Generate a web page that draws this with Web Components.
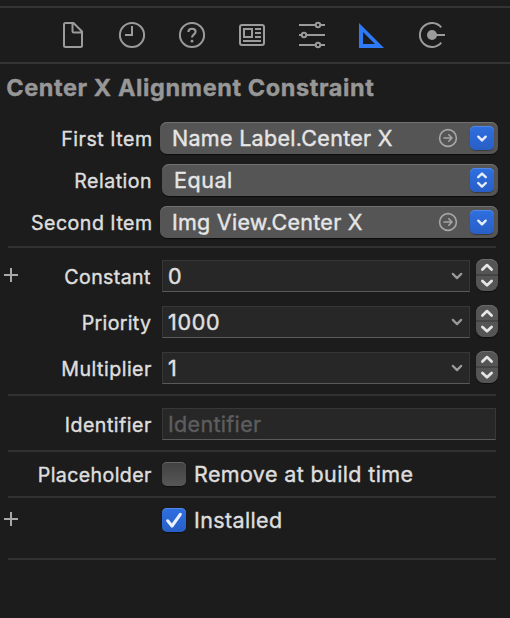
<!DOCTYPE html>
<html lang="en">
<head>
<meta charset="utf-8">
<title>Size Inspector</title>
<style>
html,body{margin:0;background:#1c1c1c;color:#dedede;font-family:Inter,"Liberation Sans",sans-serif;overflow:hidden}
</style>
</head>
<body>
<constraint-inspector></constraint-inspector>
<script>
function define(name, css, html, after) {
  const t = document.createElement('template');
  t.innerHTML = '<style>' + css + '</style>' + html;
  customElements.define(name, class extends HTMLElement {
    constructor() { super(); this.attachShadow({mode: 'open'}).append(t.content.cloneNode(true)); }
    connectedCallback() { if (after) after(this, this.shadowRoot); }
  });
}

/* Text tracked to an exact ink width given by its "w" attribute. */
const ctx = document.createElement('canvas').getContext('2d');
define('tracked-text', ':host{display:block;flex:none;white-space:pre;line-height:28px;height:28px;-webkit-text-stroke:.4px currentColor}span{display:block}', '<span><slot></slot></span>', (el, root) => {
  const w = +el.getAttribute('w'), s = el.textContent, cs = getComputedStyle(el);
  ctx.font = cs.fontWeight + ' ' + cs.fontSize + ' ' + cs.fontFamily;
  const m = ctx.measureText(s), ink = m.actualBoundingBoxRight + m.actualBoundingBoxLeft;
  const span = root.querySelector('span');
  el.style.width = w + 'px';
  span.style.marginLeft = m.actualBoundingBoxLeft + 'px';
  if (s.length > 1) span.style.letterSpacing = (w - ink) / (s.length - 1) + 'px';
});

define('inspector-tabs', `
:host{display:block;height:54px;margin-top:6px;border-top:2px solid #343434;border-bottom:2px solid #343434}
svg{display:block;width:510px;height:54px;fill:none;stroke:#9b9b9b;stroke-width:2}`, `
<svg viewBox="0 8 510 54">
<path d="M65.5 23H73.5L82 31.5V45.5Q82 47 80.5 47H65.5Q64 47 64 45.5V24.5Q64 23 65.5 23ZM72.5 23V31Q72.5 32.5 74 32.5H82"/>
<circle cx="132" cy="35" r="12.1"/><path d="M125 35H132V26"/>
<circle cx="192" cy="35" r="12.1"/>
<path d="M188.4 32C188.5 29.8 189.9 28.8 192 28.8C194.1 28.8 195.6 30 195.6 31.8C195.6 34.4 192 34.4 192 37.6" stroke-width="2.1"/><circle cx="192" cy="41.2" r="1.4" fill="#9b9b9b" stroke="none"/>
<rect x="240" y="25" width="24" height="20" rx="2"/><rect x="244" y="29" width="8" height="8"/><path d="M255 29H261M255 33H261M255 37H261M243 41H261"/>
<path d="M299 25H315.5M320.5 25H325M299 35H301.5M306.5 35H325M299 45H315.5M320.5 45H325"/><circle cx="318" cy="25" r="2.2"/><circle cx="304" cy="35" r="2.2"/><circle cx="318" cy="45" r="2.2"/>
<path d="M359 23L384 48H359ZM363 32V44H375Z" fill="#2e7af6" fill-rule="evenodd" stroke="none"/>
<path d="M441.2 27.4A12 12 0 1 0 441.2 42.6"/><circle cx="432" cy="35" r="5" fill="#9b9b9b" stroke="none"/><path d="M432 35H445"/>
</svg>`);

define('panel-title', ':host{display:flex;height:30px;padding:10px 0 0 7.2px;font-size:23.5px;font-weight:700;color:#979797}', '<slot></slot>');
define('panel-rule', ':host{display:block;height:2px;margin:0 14px 0 8px;background:#313131}', '');

define('form-row', `
:host{display:grid;grid-template-columns:22px 129px 1fr;height:32px;align-items:center}
.add{width:14px;height:14px;margin-left:4px;margin-top:-2px;background:linear-gradient(#a9a9a9,#a9a9a9) 6px 0/2px 14px no-repeat,linear-gradient(#a9a9a9,#a9a9a9) 0 6px/14px 2px no-repeat;visibility:hidden}
:host([add]) .add{visibility:visible}
.label{display:flex;justify-content:flex-end;font-size:19.6px;padding-top:1px}
.body{display:flex;align-items:center;padding-left:11px}
:host([wide]) .body{padding-left:9px}`, '<div class="add"></div><div class="label"><slot name="label"></slot></div><div class="body"><slot></slot></div>');

define('pop-button', `
:host{display:flex;box-sizing:border-box;flex:1;height:32px;margin-right:12px;padding:0 4px 0 13px;align-items:center;border-radius:7px;background:#555;box-shadow:inset 0 1px #717171,0 1px 1px #0009;font-size:21.5px;color:#e6e6e6}
.sp{flex:1}.go{margin-right:12px;display:none}:host([link]) .go{display:block}
.btn{width:24px;height:24px;border-radius:5px;background:linear-gradient(#2f6fe0,#285fc6);box-shadow:inset 0 1px #5188e8,0 1px 1px #0005}
svg{display:block;fill:none;stroke-linecap:round;stroke-linejoin:round}
.two{display:none}:host(:not([link])) .two{display:block}:host(:not([link])) .one{display:none}`, `
<slot></slot><div class="sp"></div>
<svg class="go" width="20" height="20" stroke="#a6a6a6" stroke-width="1.6"><circle cx="10" cy="10" r="8.4"/><path d="M6 10H14M10.8 6.8L14 10L10.8 13.2"/></svg>
<div class="btn"><svg width="24" height="24" stroke="#e6edfb" stroke-width="2.4"><path class="one" d="M8.3 10.7L12 14.4L15.7 10.7"/><path class="two" d="M8.2 9.2L12 5.6L15.8 9.2M8.2 15L12 18.6L15.8 15"/></svg></div>`);

define('value-field', `
:host{display:flex;box-sizing:border-box;height:32px;width:308px;padding:0 6px;align-items:center;justify-content:space-between;background:#272727;border:1px solid #373737;border-bottom-color:#5a5a5a;font-size:21.5px;color:#e0e0e0}
:host([plain]){width:334px;color:#5d5d5d}:host([plain]) svg{display:none}`, `
<slot></slot><svg width="12" height="8" fill="none" stroke="#999" stroke-width="2.2" stroke-linecap="round" stroke-linejoin="round"><path d="M1.8 1.9L6 6.1L10.2 1.9"/></svg>`);

define('step-control', `
:host{display:block;width:22px;height:32px;margin:-2px 0 0 6px;border-radius:8px;background:linear-gradient(#555 15px,#444 15px,#444 17px,#555 17px);box-shadow:inset 0 1px #6b6b6b,0 1px 1px #0008}
svg{display:block;fill:none;stroke:#e6e6e6;stroke-width:2.7;stroke-linecap:round;stroke-linejoin:round}`, `
<svg width="22" height="32"><path d="M6.4 10.5L11 6.1L15.6 10.5M6.4 21.9L11 26.3L15.6 21.9"/></svg>`);

define('check-box', `
:host{display:flex;align-items:center;font-size:21.5px;color:#dedede}
.box{width:24px;height:24px;margin-right:9px;border-radius:5px;background:linear-gradient(#414141,#575757);box-shadow:inset 0 1px #666,0 1px 1px #0006}
svg{display:none}:host([checked]) .box{background:linear-gradient(#2f6fe0,#285fc6);box-shadow:inset 0 1px #5188e8,0 1px 1px #0006}:host([checked]) svg{display:block}`, `
<div class="box"><svg width="24" height="24" fill="none" stroke="#e9f0fc" stroke-width="3.1" stroke-linecap="round" stroke-linejoin="round"><path d="M5.7 12.8L10 18L18.3 6.3"/></svg></div><slot></slot>`);

define('constraint-inspector', `
:host{display:flow-root;box-sizing:border-box;width:510px;height:618px;background:#1c1c1c}
.g{display:grid}.items{gap:10px;padding:18px 0 8px}.numbers{gap:14px;padding:12px 0 10px}.ident{padding:12px 0 10px}.ph{padding:6px 0}.inst{padding:6px 0 22px}`, `
<inspector-tabs></inspector-tabs>
<panel-title><tracked-text w="367">Center X Alignment Constraint</tracked-text></panel-title>
<div class="g items">
<form-row wide><tracked-text slot="label" w="88.8">First Item</tracked-text><pop-button link><tracked-text w="219.8">Name Label.Center X</tracked-text></pop-button></form-row>
<form-row><tracked-text slot="label" w="75.8">Relation</tracked-text><pop-button><tracked-text w="56">Equal</tracked-text></pop-button></form-row>
<form-row wide><tracked-text slot="label" w="119">Second Item</tracked-text><pop-button link><tracked-text w="189.8">Img View.Center X</tracked-text></pop-button></form-row>
</div><panel-rule></panel-rule>
<div class="g numbers">
<form-row add><tracked-text slot="label" w="85.7">Constant</tracked-text><value-field><tracked-text w="12.3">0</tracked-text></value-field><step-control></step-control></form-row>
<form-row><tracked-text slot="label" w="68.3">Priority</tracked-text><value-field><tracked-text w="50">1000</tracked-text></value-field><step-control></step-control></form-row>
<form-row><tracked-text slot="label" w="88.7">Multiplier</tracked-text><value-field><tracked-text w="8">1</tracked-text></value-field><step-control></step-control></form-row>
</div><panel-rule></panel-rule>
<div class="ident"><form-row><tracked-text slot="label" w="85.3">Identifier</tracked-text><value-field plain><tracked-text w="92">Identifier</tracked-text></value-field></form-row></div>
<panel-rule></panel-rule>
<div class="ph"><form-row><tracked-text slot="label" w="112.2">Placeholder</tracked-text><check-box><tracked-text w="217.5">Remove at build time</tracked-text></check-box></form-row></div>
<panel-rule></panel-rule>
<div class="inst"><form-row add><check-box checked><tracked-text w="86">Installed</tracked-text></check-box></form-row></div>
<panel-rule></panel-rule>`);
</script>
</body>
</html>
